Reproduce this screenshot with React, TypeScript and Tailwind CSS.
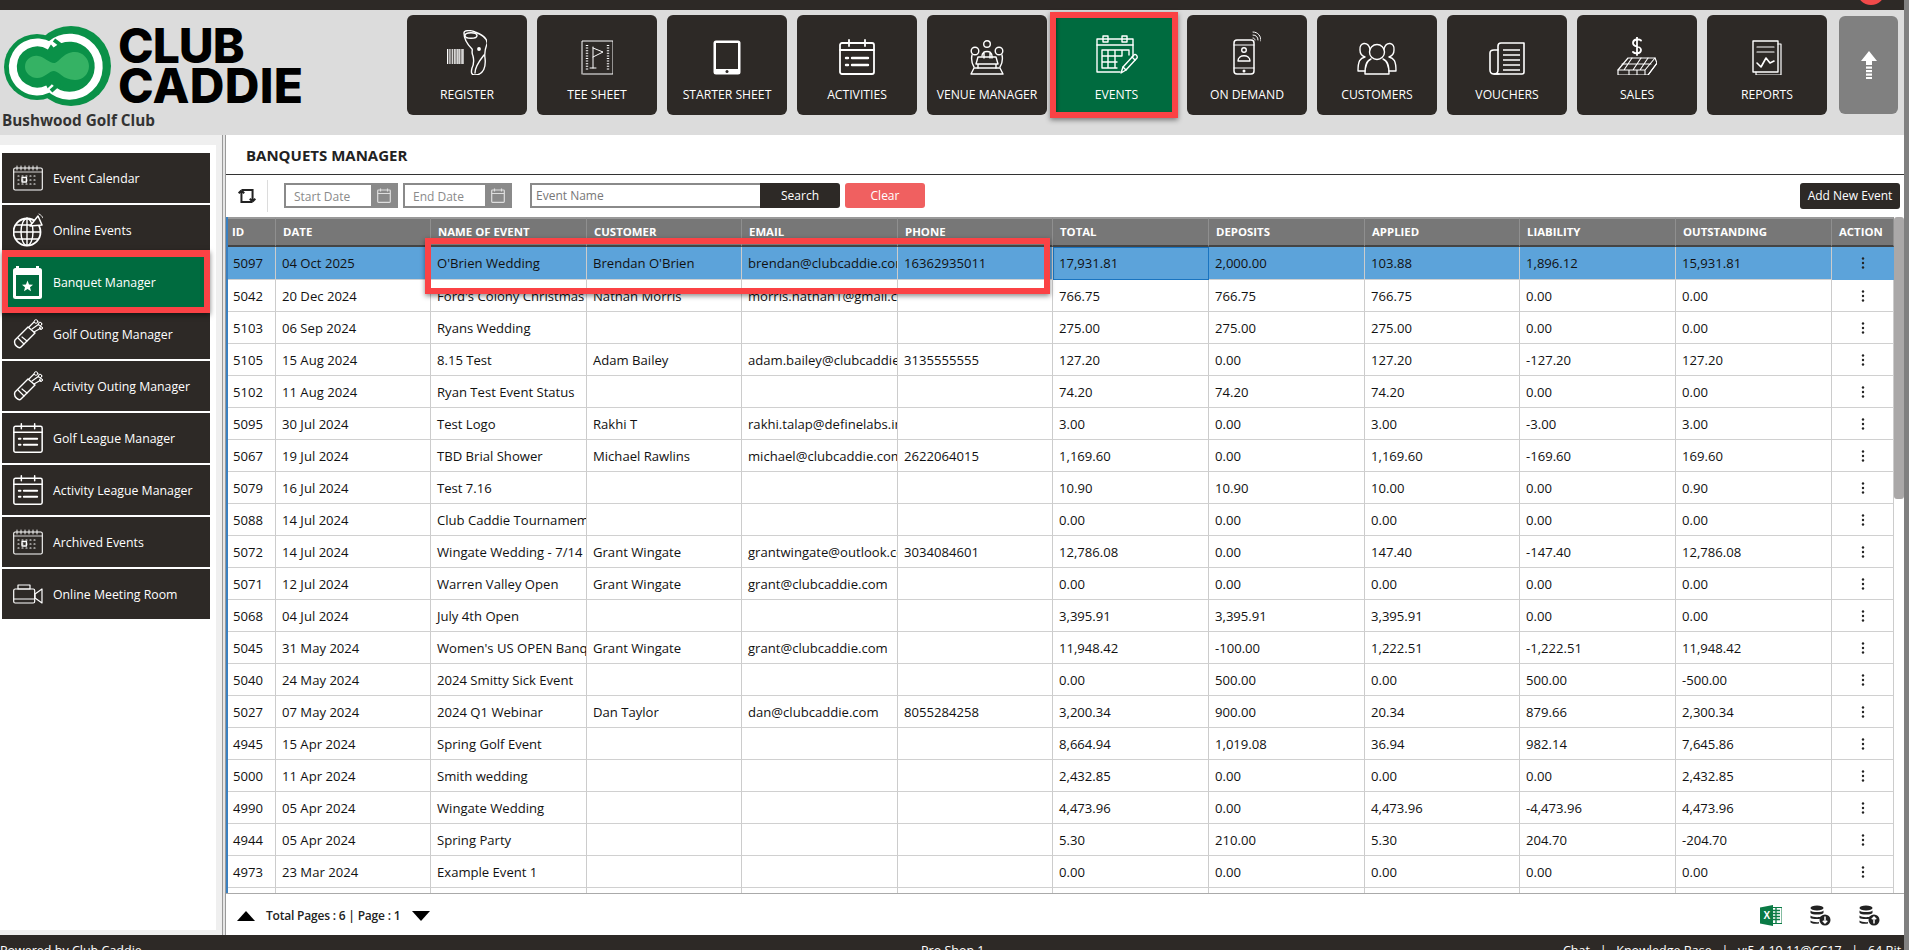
import React from "react";

const font = { fontFamily: '"Open Sans","Noto Sans",sans-serif' };

type P = { children: React.ReactNode; w: number; h: number; vb?: string };
const S = ({ children, w, h, vb }: P) => (
  <svg width={w} height={h} viewBox={vb || `0 0 ${w} ${h}`} fill="none" stroke="#fff" strokeWidth={1.4} strokeLinecap="round" strokeLinejoin="round" className="block shrink-0">
    {children}
  </svg>
);

const Bars = () => (
  <g fill="#fff" stroke="none">
    {[0, 2, 3.5, 5, 7, 8, 9.5, 11, 12, 13.5, 15, 16].map((x, i) => (
      <rect key={i} x={x} y={19} width={i % 3 === 0 ? 1.3 : 0.8} height={15} opacity={i % 2 ? 0.8 : 1} />
    ))}
  </g>
);

const RegisterIcon = () => (
  <S w={40} h={45}>
    <Bars />
    <path d="M17 3C17 0 24 0 28 2C36 5 41 9 40 14C38 19 37 22 38 28C39 36 37 45 28 45C24 45 24 42 25 38C27 34 27 30 26 26C24 22 26 20 25 19C22 16 17 10 17 3Z" />
    <ellipse cx={24} cy={5.5} rx={6} ry={2.8} />
    <circle cx={32} cy={19} r={1.2} fill="#fff" />
    <path d="M28 43C28 36 33 30 37 25" />
  </S>
);
const TeeIcon = () => (
  <S w={32} h={35}>
    <path d="M1 34V1H32V34H2" strokeWidth={1} />
    <path d="M6 5V31M27 5V31" strokeWidth={2.4} strokeDasharray="1 1.6" strokeLinecap="butt" />
    <path d="M12 7V28M9 28H15M12 8L22 12L12 17" strokeWidth={1} />
  </S>
);
const TabletIcon = () => (
  <S w={28} h={35}>
    <rect x={0.5} y={0.5} width={27} height={34} rx={2.5} fill="#fff" stroke="none" />
    <rect x={3} y={3} width={22} height={26} fill="#2d2926" stroke="none" />
    <circle cx={14} cy={31.5} r={1.5} fill="#2d2926" stroke="none" />
  </S>
);
const ListCal = ({ w = 36, h = 36 }: { w?: number; h?: number }) => (
  <S w={w} h={h} vb="0 0 36 36">
    <rect x={1} y={4} width={34} height={31} rx={2} strokeWidth={1.8} />
    <path d="M1 11H35M10 1V7M26 1V7" strokeWidth={1.8} />
    <path d="M13 19H29M13 26H29" strokeWidth={2.4} />
    <path d="M7 19H9M7 26H9" strokeWidth={2.4} />
  </S>
);
const VenueIcon = () => (
  <S w={34} h={35}>
    <circle cx={17} cy={4} r={3.3} />
    <circle cx={5} cy={11} r={3.8} />
    <circle cx={29} cy={11} r={3.8} />
    <path d="M12 16C12 10 22 10 22 16V18M14 12V18M20 12V18" />
    <path d="M2 15C1 20 2 24 4 27M32 15C33 20 32 24 30 27" />
    <path d="M8 17H26L28 24H6ZM8 24V28M26 24V28" />
    <path d="M4 28H30L33 34H1Z" />
  </S>
);
const EventsIcon = () => (
  <S w={42} h={40}>
    <path d="M24 37H1V4H37V21" />
    <path d="M1 10H37" />
    <rect x={7} y={1} width={5} height={6} />
    <rect x={26} y={1} width={5} height={6} />
    <path d="M6 15H33V20M6 15V33H21M6 21H26M6 27H21M12 15V33M19 15V33M26 15V21" />
    <path d="M25 38L27 32L38 20C39 18 42 21 41 23L30 35Z" />
    <path d="M27 32L30 35M36 22L39 25" />
  </S>
);
const DemandIcon = () => (
  <S w={28} h={45}>
    <rect x={1} y={10} width={20} height={34} rx={3} strokeWidth={1.5} />
    <path d="M1 15H21M1 38H21" strokeWidth={1} />
    <circle cx={11} cy={41} r={0.8} fill="#fff" />
    <circle cx={11} cy={20} r={2.3} />
    <path d="M5 31C5 24 17 24 17 31Z" />
    <path d="M20 5C23 5 25 7 25 10M20 2C25 2 28 6 28 11M20 8C21 8 22 9 22 10" strokeWidth={1} />
  </S>
);
const CustomersIcon = () => (
  <S w={40} h={33}>
    <circle cx={20} cy={10} r={7.5} />
    <path d="M13 7C11 -1 2 0 3 8C3 11 5 14 8 15C3 16 1 19 1 29H8M27 7C29 -1 38 0 37 8C37 11 35 14 32 15C37 16 39 19 39 29H32" />
    <path d="M14 17C9 19 8 24 8 32H32C32 24 31 19 26 17" />
  </S>
);
const VouchersIcon = () => (
  <S w={36} h={33}>
    <path d="M10 32H5C2 32 1 30 1 28V11C1 9 3 8 5 8H9" strokeWidth={1.6} />
    <path d="M9 4C9 2 10 1 12 1H35V30C35 31 34 32 33 32H5C8 32 9 30 9 28Z" strokeWidth={1.6} />
    <path d="M14 8H31M14 13H31M14 18H31M14 23H31M14 28H31" strokeWidth={1.5} strokeLinecap="butt" />
  </S>
);
const SalesIcon = () => (
  <S w={40} h={38}>
    <path d="M24 3.5C22 1.500 16 2 16 6C16 11 24 8 24 13C24 17 18 17 16 15M20 0V18" strokeWidth={1.8} />
    <path d="M11 21H38L40 26L31 38H1V33L11 21Z" strokeWidth={1.2} />
    <path d="M1 33H28L38 21M28 33V38M12 33V38M20 33V38M15 21L7 33M24 21L16 33M31 21L23 33M5 27H34M40 26L31 38" strokeWidth={1.1} />
  </S>
);
const ReportsIcon = () => (
  <S w={30} h={35}>
    <rect x={1} y={1} width={25} height={31} strokeWidth={1.4} />
    <path d="M26 4H29V35H4V32" strokeWidth={1.2} />
    <path d="M5 7H22M5 12H22" strokeWidth={1.2} />
    <path d="M5 23L9 27L14 18L18 23L22 21" strokeWidth={1.6} />
  </S>
);
const ArrowIcon = () => (
  <svg width={16} height={28} viewBox="0 0 16 28" fill="#fff" className="block">
    <path d="M8 0L16 10H11V14H5V10H0Z" />
    <rect x={5} y={15.500} width={6} height={2.2} />
    <rect x={5} y={19} width={6} height={2.2} />
    <rect x={5} y={22.500} width={6} height={2.2} />
    <rect x={5} y={26} width={6} height={2} />
  </svg>
);

const DotCal = () => (
  <S w={30} h={26}>
    <rect x={0.7} y={3} width={28.600} height={22} rx={1.5} strokeWidth={1.1} />
    <path d="M1 7H29" strokeWidth={0.8} />
    <path d="M4 1V5M8 1V5M12 1V5M16 1V5M20 1V5M24 1V5" strokeWidth={0.9} />
    <path d="M5 11H25M5 15H25M5 19H25" strokeWidth={1.2} strokeDasharray="1 3" />
    <rect x={9} y={12.500} width={4.500} height={4.500} strokeWidth={1.3} />
  </S>
);
const GlobeIcon = () => (
  <S w={30} h={34}>
    <circle cx={14} cy={19} r={13.5} strokeWidth={1.8} />
    <ellipse cx={14} cy={19} rx={6} ry={13.5} strokeWidth={1.4} />
    <path d="M1 19H27M3 12H20M3 26H25M14 5V32" strokeWidth={1.4} />
    <path d="M17 13L25 3L29 12Z" fill="#2d2926" strokeWidth={1.5} />
    <path d="M26 1C28 2 29 3 30 5" strokeWidth={0.9} />
  </S>
);
const StarCal = () => (
  <svg width={29} height={34} viewBox="0 0 29 34" className="block shrink-0">
    <rect y={3} width={29} height={31} rx={2.500} fill="#fff" />
    <rect x={3} y={1} width={3} height={5} fill="#fff" />
    <rect x={23} y={1} width={3} height={5} fill="#fff" />
    <rect x={3} y={10} width={23} height={21} fill="#006b3f" />
    <path d="M14.500 15.500L16 19.500L20 19.800L17 22.300L18 26.300L14.500 24.100L11 26.300L12 22.300L9 19.800L13 19.500Z" fill="#fff" />
  </svg>
);
const BagIcon = () => (
  <S w={30} h={30}>
    <path d="M2 21L15 8L22 14L8 28C6 30 0 26 2 21Z" strokeWidth={1.4} />
    <path d="M5 19L11 25M9 18L14 22" strokeWidth={1.2} />
    <path d="M16 8L21 3M19 10L26 5M21 13L28 9" strokeWidth={1.2} />
    <circle cx={23} cy={2.500} r={1.800} strokeWidth={1} />
    <circle cx={27} cy={5} r={1.800} strokeWidth={1} />
    <circle cx={28} cy={9} r={1.500} strokeWidth={1} />
  </S>
);
const VideoIcon = () => (
  <S w={30} h={20}>
    <rect x={0.7} y={5} width={21} height={14} rx={1.5} strokeWidth={1.2} />
    <rect x={5} y={1} width={12} height={4} strokeWidth={1.2} />
    <path d="M1 15H21" strokeWidth={1} />
    <path d="M22 10L29 5V19L22 14Z" strokeWidth={1.2} />
  </S>
);

const Logo = () => (
  <svg width={107} height={80} viewBox="0 0 107 80" className="block shrink-0">
    <circle cx={67} cy={40} r={40} fill="#0a9148" />
    <circle cx={33} cy={41} r={33} fill="#0a9148" />
    <path d="M47 18.500A29 29 0 1 1 45 61" fill="none" stroke="#fff" strokeWidth={8} />
    <path d="M46 20A24.500 24.500 0 1 0 44 63" fill="none" stroke="#fff" strokeWidth={8} />
    <path d="M50 14L58 20M47 65L56 57" stroke="#0a9148" strokeWidth={4} />
    <path d="M21 41C21 33 28 29 34 30C41 31 45 37 50 37C55 37 59 26 71 26C79 26 85 33 85 40C85 48 79 54 71 54C59 54 55 45 50 45C45 45 41 52 33 52C27 52 21 47 21 41Z" fill="#35b264" />
  </svg>
);

const nav: [string, React.ReactNode][] = [
  ["REGISTER", <RegisterIcon />],
  ["TEE SHEET", <TeeIcon />],
  ["STARTER SHEET", <TabletIcon />],
  ["ACTIVITIES", <ListCal />],
  ["VENUE MANAGER", <VenueIcon />],
  ["EVENTS", <EventsIcon />],
  ["ON DEMAND", <DemandIcon />],
  ["CUSTOMERS", <CustomersIcon />],
  ["VOUCHERS", <VouchersIcon />],
  ["SALES", <SalesIcon />],
  ["REPORTS", <ReportsIcon />],
];

const side: [string, React.ReactNode][] = [
  ["Event Calendar", <DotCal />],
  ["Online Events", <GlobeIcon />],
  ["Banquet Manager", <StarCal />],
  ["Golf Outing Manager", <BagIcon />],
  ["Activity Outing Manager", <BagIcon />],
  ["Golf League Manager", <ListCal w={30} h={30} />],
  ["Activity League Manager", <ListCal w={30} h={30} />],
  ["Archived Events", <DotCal />],
  ["Online Meeting Room", <VideoIcon />],
];

const heads = ["ID", "DATE", "NAME OF EVENT", "CUSTOMER", "EMAIL", "PHONE", "TOTAL", "DEPOSITS", "APPLIED", "LIABILITY", "OUTSTANDING", "ACTION"];
const widths = [48, 155, 156, 155, 156, 155, 156, 156, 155, 156, 156, 62];

const rows: string[][] = [
  ["5097", "04 Oct 2025", "O'Brien Wedding", "Brendan O'Brien", "brendan@clubcaddie.com", "16362935011", "17,931.81", "2,000.00", "103.88", "1,896.12", "15,931.81"],
  ["5042", "20 Dec 2024", "Ford's Colony Christmas", "Nathan Morris", "morris.nathan1@gmail.com", "", "766.75", "766.75", "766.75", "0.00", "0.00"],
  ["5103", "06 Sep 2024", "Ryans Wedding", "", "", "", "275.00", "275.00", "275.00", "0.00", "0.00"],
  ["5105", "15 Aug 2024", "8.15 Test", "Adam Bailey", "adam.bailey@clubcaddie.com", "3135555555", "127.20", "0.00", "127.20", "-127.20", "127.20"],
  ["5102", "11 Aug 2024", "Ryan Test Event Status", "", "", "", "74.20", "74.20", "74.20", "0.00", "0.00"],
  ["5095", "30 Jul 2024", "Test Logo", "Rakhi T", "rakhi.talap@definelabs.in", "", "3.00", "0.00", "3.00", "-3.00", "3.00"],
  ["5067", "19 Jul 2024", "TBD Brial Shower", "Michael Rawlins", "michael@clubcaddie.com", "2622064015", "1,169.60", "0.00", "1,169.60", "-169.60", "169.60"],
  ["5079", "16 Jul 2024", "Test 7.16", "", "", "", "10.90", "10.90", "10.00", "0.00", "0.90"],
  ["5088", "14 Jul 2024", "Club Caddie Tournamement", "", "", "", "0.00", "0.00", "0.00", "0.00", "0.00"],
  ["5072", "14 Jul 2024", "Wingate Wedding - 7/14", "Grant Wingate", "grantwingate@outlook.com", "3034084601", "12,786.08", "0.00", "147.40", "-147.40", "12,786.08"],
  ["5071", "12 Jul 2024", "Warren Valley Open", "Grant Wingate", "grant@clubcaddie.com", "", "0.00", "0.00", "0.00", "0.00", "0.00"],
  ["5068", "04 Jul 2024", "July 4th Open", "", "", "", "3,395.91", "3,395.91", "3,395.91", "0.00", "0.00"],
  ["5045", "31 May 2024", "Women's US OPEN Banquet", "Grant Wingate", "grant@clubcaddie.com", "", "11,948.42", "-100.00", "1,222.51", "-1,222.51", "11,948.42"],
  ["5040", "24 May 2024", "2024 Smitty Sick Event", "", "", "", "0.00", "500.00", "0.00", "500.00", "-500.00"],
  ["5027", "07 May 2024", "2024 Q1 Webinar", "Dan Taylor", "dan@clubcaddie.com", "8055284258", "3,200.34", "900.00", "20.34", "879.66", "2,300.34"],
  ["4945", "15 Apr 2024", "Spring Golf Event", "", "", "", "8,664.94", "1,019.08", "36.94", "982.14", "7,645.86"],
  ["5000", "11 Apr 2024", "Smith wedding", "", "", "", "2,432.85", "0.00", "0.00", "0.00", "2,432.85"],
  ["4990", "05 Apr 2024", "Wingate Wedding", "", "", "", "4,473.96", "0.00", "4,473.96", "-4,473.96", "4,473.96"],
  ["4944", "05 Apr 2024", "Spring Party", "", "", "", "5.30", "210.00", "5.30", "204.70", "-204.70"],
  ["4973", "23 Mar 2024", "Example Event 1", "", "", "", "0.00", "0.00", "0.00", "0.00", "0.00"],
  ["", "", "", "", "", "", "", "", "", "", ""],
];

const Dots = () => (
  <svg width={4} height={12} viewBox="0 0 4 12" className="block mx-auto" fill="#222">
    <circle cx={2} cy={1.500} r={1.200} />
    <circle cx={2} cy={6} r={1.200} />
    <circle cx={2} cy={10.500} r={1.200} />
  </svg>
);

const DateField = ({ label, w, tw }: { label: string; w: string; tw: string }) => (
  <div className={`flex h-[25px] border-2 border-[#8a8a8a] bg-white ${w}`}>
    <span className={`pl-2 pt-px text-[12px] leading-[21px] text-[#8a8a8a] whitespace-nowrap ${tw}`}>{label}</span>
    <span className="flex w-[25px] items-center justify-center bg-[#8a8a8a]">
      <svg width={14} height={15} viewBox="0 0 14 15" fill="none" stroke="#dedede" strokeWidth={1.200}>
        <rect x={0.700} y={2} width={12.600} height={12.300} rx={0.800} />
        <path d="M0.700 5.500H13.300M3.500 0.500V3.500M10.500 0.500V3.500" />
      </svg>
    </span>
  </div>
);

const DbIcon = ({ up }: { up?: boolean }) => (
  <svg width={21} height={21} viewBox="0 0 21 21" className="block">
    <g fill="#222">
      <ellipse cx={7} cy={3} rx={6.500} ry={2.600} />
      <path d="M0.500 5.500C2 7.500 12 7.500 13.500 5.500V8C12 10 2 10 0.500 8Z" />
      <path d="M0.500 10.500C2 12.500 10 12.500 11 11.500V13.500C8 14.500 2 14 0.500 13Z" />
      <path d="M0.500 15.500C2 17 7 17.500 9 17V18.500C6 19 2 19 0.500 17.500Z" />
      <circle cx={15} cy={15} r={5.500} />
    </g>
    <path d={up ? "M15 18.500V12M12.800 14.200L15 12L17.200 14.200" : "M15 11.500V18M12.800 15.800L15 18L17.200 15.800"} stroke="#fff" strokeWidth={1.500} fill="none" />
  </svg>
);

const ExcelIcon = () => (
  <svg width={22} height={21} viewBox="0 0 22 21" className="block">
    <rect x={10} y={2.500} width={12} height={16} fill="#fff" stroke="#0a7a45" strokeWidth={1} />
    <path d="M12 5.500H20M12 8.500H20M12 11.500H20M12 14.500H20M16 3V18" stroke="#0a7a45" strokeWidth={1.400} />
    <path d="M0 2.500L13 0V21L0 18.500Z" fill="#0a7a45" />
    <text x={3.500} y={14} fontSize={10} fill="#fff" fontFamily="Liberation Sans, sans-serif">X</text>
  </svg>
);

export default function App() {
  return (
    <div className="flex h-[950px] w-[1909px] overflow-hidden bg-white text-[#222]" style={font}>
      <div className="flex w-[1904px] flex-col">
        {/* top bar */}
        <div className="relative h-[10px] shrink-0 overflow-hidden bg-[#2d2926]">
          <span className="absolute -top-[23px] left-[1857px] h-[28px] w-[28px] rounded-full bg-[#f24a4a]" />
        </div>

        {/* header */}
        <div className="flex h-[125px] shrink-0 bg-[#dcdcdc]">
          <div className="w-[407px] shrink-0">
            <div className="flex h-[101px] pl-[4px] pt-[16px]">
              <Logo />
              <div className="ml-[7px] text-[48px] font-extrabold leading-[40px] text-black" style={{ fontFamily: "Inter, sans-serif" }}>
                <div className="tracking-[-1px]">CLUB</div>
                <div className="tracking-[0.300px]">CADDIE</div>
              </div>
            </div>
            <div className="-mt-[1px] whitespace-nowrap pl-[2px] text-[15.300px] font-bold leading-[20px] text-[#333]">Bushwood Golf Club</div>
          </div>

          <div className="flex gap-[10px] pt-[5px]">
            {nav.map(([label, icon]) => {
              const on = label === "EVENTS";
              return (
                <div key={label} className="relative h-[100px] w-[120px]">
                  <div className={`flex h-full flex-col items-center text-white ${on ? "-ml-px w-[121px] bg-[#006b3f] shadow-[inset_0_0_4px_rgba(0,0,0,0.6)]" : "rounded-[6px] bg-[#2d2926]"}`}>
                    <div className="flex h-[60px] items-end">{icon}</div>
                    <div className="mt-[13px] whitespace-nowrap text-[12.200px] font-medium leading-[14px]">{label}</div>
                  </div>
                  {on && <div className="absolute -bottom-[3px] -left-[7px] -top-[3px] right-[-1px] border-[6px] border-[#fb4245] shadow-[0_2px_5px_rgba(0,0,0,0.45)]" />}
                </div>
              );
            })}
            <div className="ml-[2px] mt-px flex h-[98px] w-[59px] items-center justify-center rounded-[6px] bg-[#808080]">
              <ArrowIcon />
            </div>
          </div>
        </div>

        {/* body */}
        <div className="flex min-h-0 flex-1">
          <aside className="h-full w-[222px] shrink-0 bg-[#efefef] pb-[5px] pr-[6px] pt-[10px]">
            <div className="flex h-full flex-col gap-[2px] bg-white pl-[2px] pr-[6px] pt-[8px]">
              {side.map(([label, icon]) => {
                const on = label === "Banquet Manager";
                return (
                  <div key={label} className={`relative flex h-[50px] shrink-0 items-center text-white ${on ? "bg-[#006b3f]" : "bg-[#2d2926]"}`}>
                    <div className="flex w-[51px] shrink-0 justify-center px-[2px]">{icon}</div>
                    <span className="mt-[2px] whitespace-nowrap text-[12.300px] leading-none">{label}</span>
                    {on && <div className="absolute -bottom-[6px] -top-[7px] left-0 right-0 z-10 border-[6px] border-b-[6px] border-t-[7px] border-[#fb4245] shadow-[0_2px_5px_rgba(0,0,0,0.5)]" />}
                  </div>
                );
              })}
            </div>
          </aside>

          {/* splitter */}
          <div className="h-full w-[4px] shrink-0 border-x border-[#9a9a9a] bg-[#e6e6e6]" />

          <main className="flex min-w-0 flex-1 flex-col">
            <div className="flex h-[40px] shrink-0 items-center border-b border-[#333] pl-[20px] pt-[2px] text-[15px] font-bold text-[#222]">BANQUETS MANAGER</div>

            <div className="flex h-[42px] shrink-0 items-center pb-px">
              <div className="flex h-[32px] w-[42px] items-center justify-center border-r border-[#dcdcdc]">
                <svg width={20} height={18} viewBox="0 0 18 16" fill="none" stroke="#222" strokeWidth={1.800}>
                  <path d="M4 4V14.500H14M1.500 6.500L4 4M6.500 6.500L4 4" transform="translate(0 -1)" />
                  <path d="M14 12V1.500H4M11.500 9.500L14 12M16.500 9.500L14 12" transform="translate(0 1)" />
                </svg>
              </div>
              <div className="ml-[16px] flex gap-[5px]">
                <DateField label="Start Date" w="w-[114px]" tw="w-[85px]" />
                <DateField label="End Date" w="w-[109px]" tw="w-[80px]" />
              </div>
              <div className="ml-[18px] flex h-[25px] w-[230px] items-center border-2 border-r-0 border-[#8a8a8a] pl-[4px] pt-px text-[12px] text-[#777]">Event Name</div>
              <button className="h-[25px] w-[80px] rounded-r-[3px] bg-[#2d2926] pt-px text-[12px] text-white">Search</button>
              <button className="ml-[5px] h-[25px] w-[80px] rounded-[3px] bg-[#f06060] pt-px text-[12px] text-white">Clear</button>
              <button className="ml-auto mr-[4px] h-[26px] w-[100px] rounded-[3px] bg-[#2d2926] pt-px text-[12px] text-white">Add New Event</button>
            </div>

            <div className="relative min-h-0 flex-1 overflow-hidden border-b border-[#aaa]">
              <div className="h-full w-[1668px] overflow-hidden border-l-2 border-[#3a80c0]">
                <table className="w-[1666px] table-fixed border-separate border-spacing-0 text-[13.100px]">
                  <colgroup>
                    {widths.map((w, i) => (
                      <col key={i} style={{ width: w }} />
                    ))}
                  </colgroup>
                  <thead>
                    <tr>
                      {heads.map((h, i) => (
                        <th key={h} className={`h-[30px] overflow-hidden whitespace-nowrap border-b-2 border-r border-t-2 border-b-[#444] border-r-[#8f8f8f] border-t-[#999] bg-[#777] text-left text-[11.400px] font-bold text-white ${i === 0 ? "pl-[4px]" : "pl-[7px]"}`}>
                          {h}
                        </th>
                      ))}
                    </tr>
                  </thead>
                  <tbody>
                    {rows.map((r, ri) => (
                      <tr key={ri} className={ri === 0 ? "bg-[#5ca3da]" : "bg-white"}>
                        {r.map((c, ci) => (
                          <td key={ci} className={`border-b border-r border-b-[#d0d0d0] border-r-[#ccc] p-0 ${ri === 0 ? "h-[33px] border-b-[#5ca3da]" : "h-[32px]"} ${ri === 0 && ci === 6 ? "outline outline-1 -outline-offset-1 outline-[#1a74c0]" : ""}`}>
                            <div className={`overflow-hidden whitespace-nowrap pr-[4px] leading-[20px] text-[#111] ${ci === 0 ? "pl-[5px]" : "pl-[6px]"}`}>{c}</div>
                          </td>
                        ))}
                        <td className={`border-b border-r p-0 ${ri === 0 ? "h-[33px] border-b-[#5ca3da] border-r-[#5ca3da]" : "h-[32px] border-b-[#d0d0d0] border-r-[#ccc]"}`}>{ri < 20 && <Dots />}</td>
                      </tr>
                    ))}
                  </tbody>
                </table>
              </div>
              {/* scrollbar */}
              <div className="absolute right-0 top-0 h-[282px] w-[10px] rounded-[3px] bg-[#aaa8a8]" />
              {/* highlight */}
              <div className="absolute left-[199px] top-[21px] h-[56px] w-[625px] border-[6px] border-[#fb4245] shadow-[0_2px_5px_rgba(0,0,0,0.45)]" />
            </div>

            <div className="flex h-[41px] shrink-0 items-center pt-[2px] text-[12px] font-semibold tracking-[-0.200px]">
              <span className="ml-[11px] h-0 w-0 border-x-[9px] border-b-[10px] border-x-transparent border-b-black" />
              <span className="ml-[11px] whitespace-nowrap">Total Pages : 6 | Page : 1</span>
              <span className="ml-[12px] h-0 w-0 border-x-[9px] border-t-[10px] border-x-transparent border-t-black" />
              <div className="ml-auto mr-[24px] flex items-center gap-[28px]">
                <ExcelIcon />
                <DbIcon />
                <DbIcon up />
              </div>
            </div>
          </main>
        </div>

        {/* footer */}
        <div className="flex h-[15px] shrink-0 overflow-hidden whitespace-nowrap bg-[#2d2926] pt-[7px] text-[12.500px] leading-[18px] text-white">
          <span className="w-[921px] shrink-0">Powered by Club Caddie</span>
          <span className="w-[642px] shrink-0">Pro Shop 1</span>
          <span className="shrink-0">Chat &nbsp; | &nbsp; Knowledge Base &nbsp; | &nbsp; v:5.4.19.11@CC17 &nbsp; | &nbsp; 64 Bit</span>
        </div>
      </div>
      <div className="w-[5px] shrink-0 bg-[#808080]" />
    </div>
  );
}
